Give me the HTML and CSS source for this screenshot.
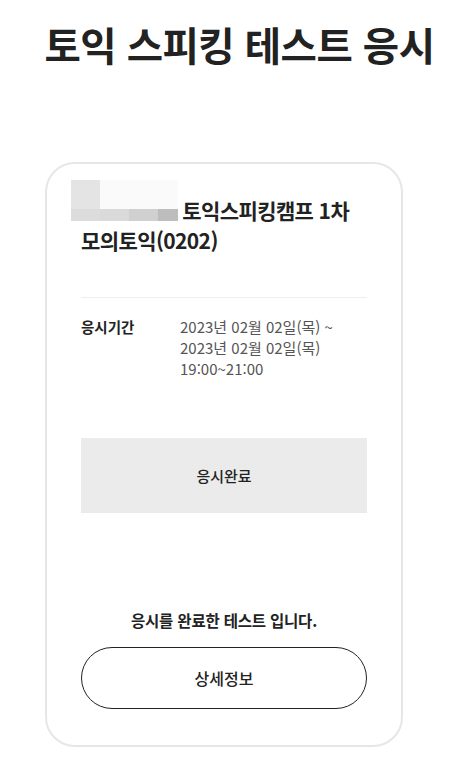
FILE: index.html
```html
<!DOCTYPE html>
<html lang="ko">
<head>
    <meta charset="UTF-8">
    <meta name="viewport" content="width=device-width, initial-scale=1.0">
    <title>토익 스피킹 테스트 응시</title>
    <link rel="stylesheet" href="styles.css">
</head>
<body>
    <h1 class="page-title">토익 스피킹 테스트 응시</h1>

    <div class="test-card">
        <h2 class="test-name">
            <span class="mosaic">
                <span class="m1"></span><span class="m2"></span>
                <span class="m3"></span><span class="m4"></span><span class="m5"></span><span class="m6"></span>
            </span>
            토익스피킹캠프 1차<br>모의토익(0202)
        </h2>

        <div class="info-row">
            <span class="info-label">응시기간</span>
            <span class="info-value">2023년 02월 02일(목) ~<br>2023년 02월 02일(목)<br>19:00~21:00</span>
        </div>

        <div class="status-box">응시완료</div>

        <p class="done-msg">응시를 완료한 테스트 입니다.</p>
        <button type="button" class="detail-btn">상세정보</button>
    </div>
</body>
</html>
```

FILE: styles.css
```css
body {
    margin: 0;
    font-family: "Noto Sans CJK KR", "Noto Sans", sans-serif;
    color: #222;
    background-color: #fff;
}
.page-title {
    margin: 0;
    padding: 17px 0 0 21px;
    text-align: center;
    font-size: 39.5px;
    font-weight: 700;
    letter-spacing: -0.5px;
    line-height: 54px;
    color: #222;
}
.test-card {
    width: 286px;
    margin: 91px 0 0 45px;
    padding: 16px 34px 36px;
    border: 2px solid #e6e6e6;
    border-radius: 30px;
}
.test-name {
    margin: 0;
    font-size: 21px;
    font-weight: 700;
    line-height: 30px;
    letter-spacing: -0.6px;
    padding-bottom: 42px;
    border-bottom: 1px solid #eee;
}
.mosaic {
    display: inline-grid;
    grid-template-columns: 29px 29px 29px 20px;
    grid-template-rows: 29px 12px;
    width: 107px;
    margin-left: -10px;
    margin-right: -1px;
    vertical-align: 10px;
}
.mosaic span { display: block; }
.m1 { background: #e4e4e4; }
.m2 { background: #fafafa; grid-column: span 3; }
.m3 { background: #dcdcdc; }
.m4 { background: #dadada; }
.m5 { background: #d0d0d0; }
.m6 { background: #bdbdbd; }
.info-row {
    display: flex;
    margin-top: 18px;
    font-size: 14.5px;
    line-height: 21px;
}
.info-label {
    width: 99px;
    font-weight: 700;
    flex-shrink: 0;
}
.info-value {
    color: #555;
    font-weight: 400;
    font-size: 15px;
}
.status-box {
    margin-top: 59px;
    height: 75px;
    display: flex;
    align-items: center;
    justify-content: center;
    background-color: #ebebeb;
    font-size: 15px;
    font-weight: 500;
}
.done-msg {
    margin: 96px 0 0;
    text-align: center;
    font-size: 15.5px;
    font-weight: 700;
    letter-spacing: -0.2px;
}
.detail-btn {
    display: block;
    width: 100%;
    height: 62px;
    margin-top: 16px;
    border: 1px solid #222;
    border-radius: 31px;
    background: #fff;
    font-family: inherit;
    font-size: 16px;
    font-weight: 500;
    color: #222;
    cursor: pointer;
}
```
